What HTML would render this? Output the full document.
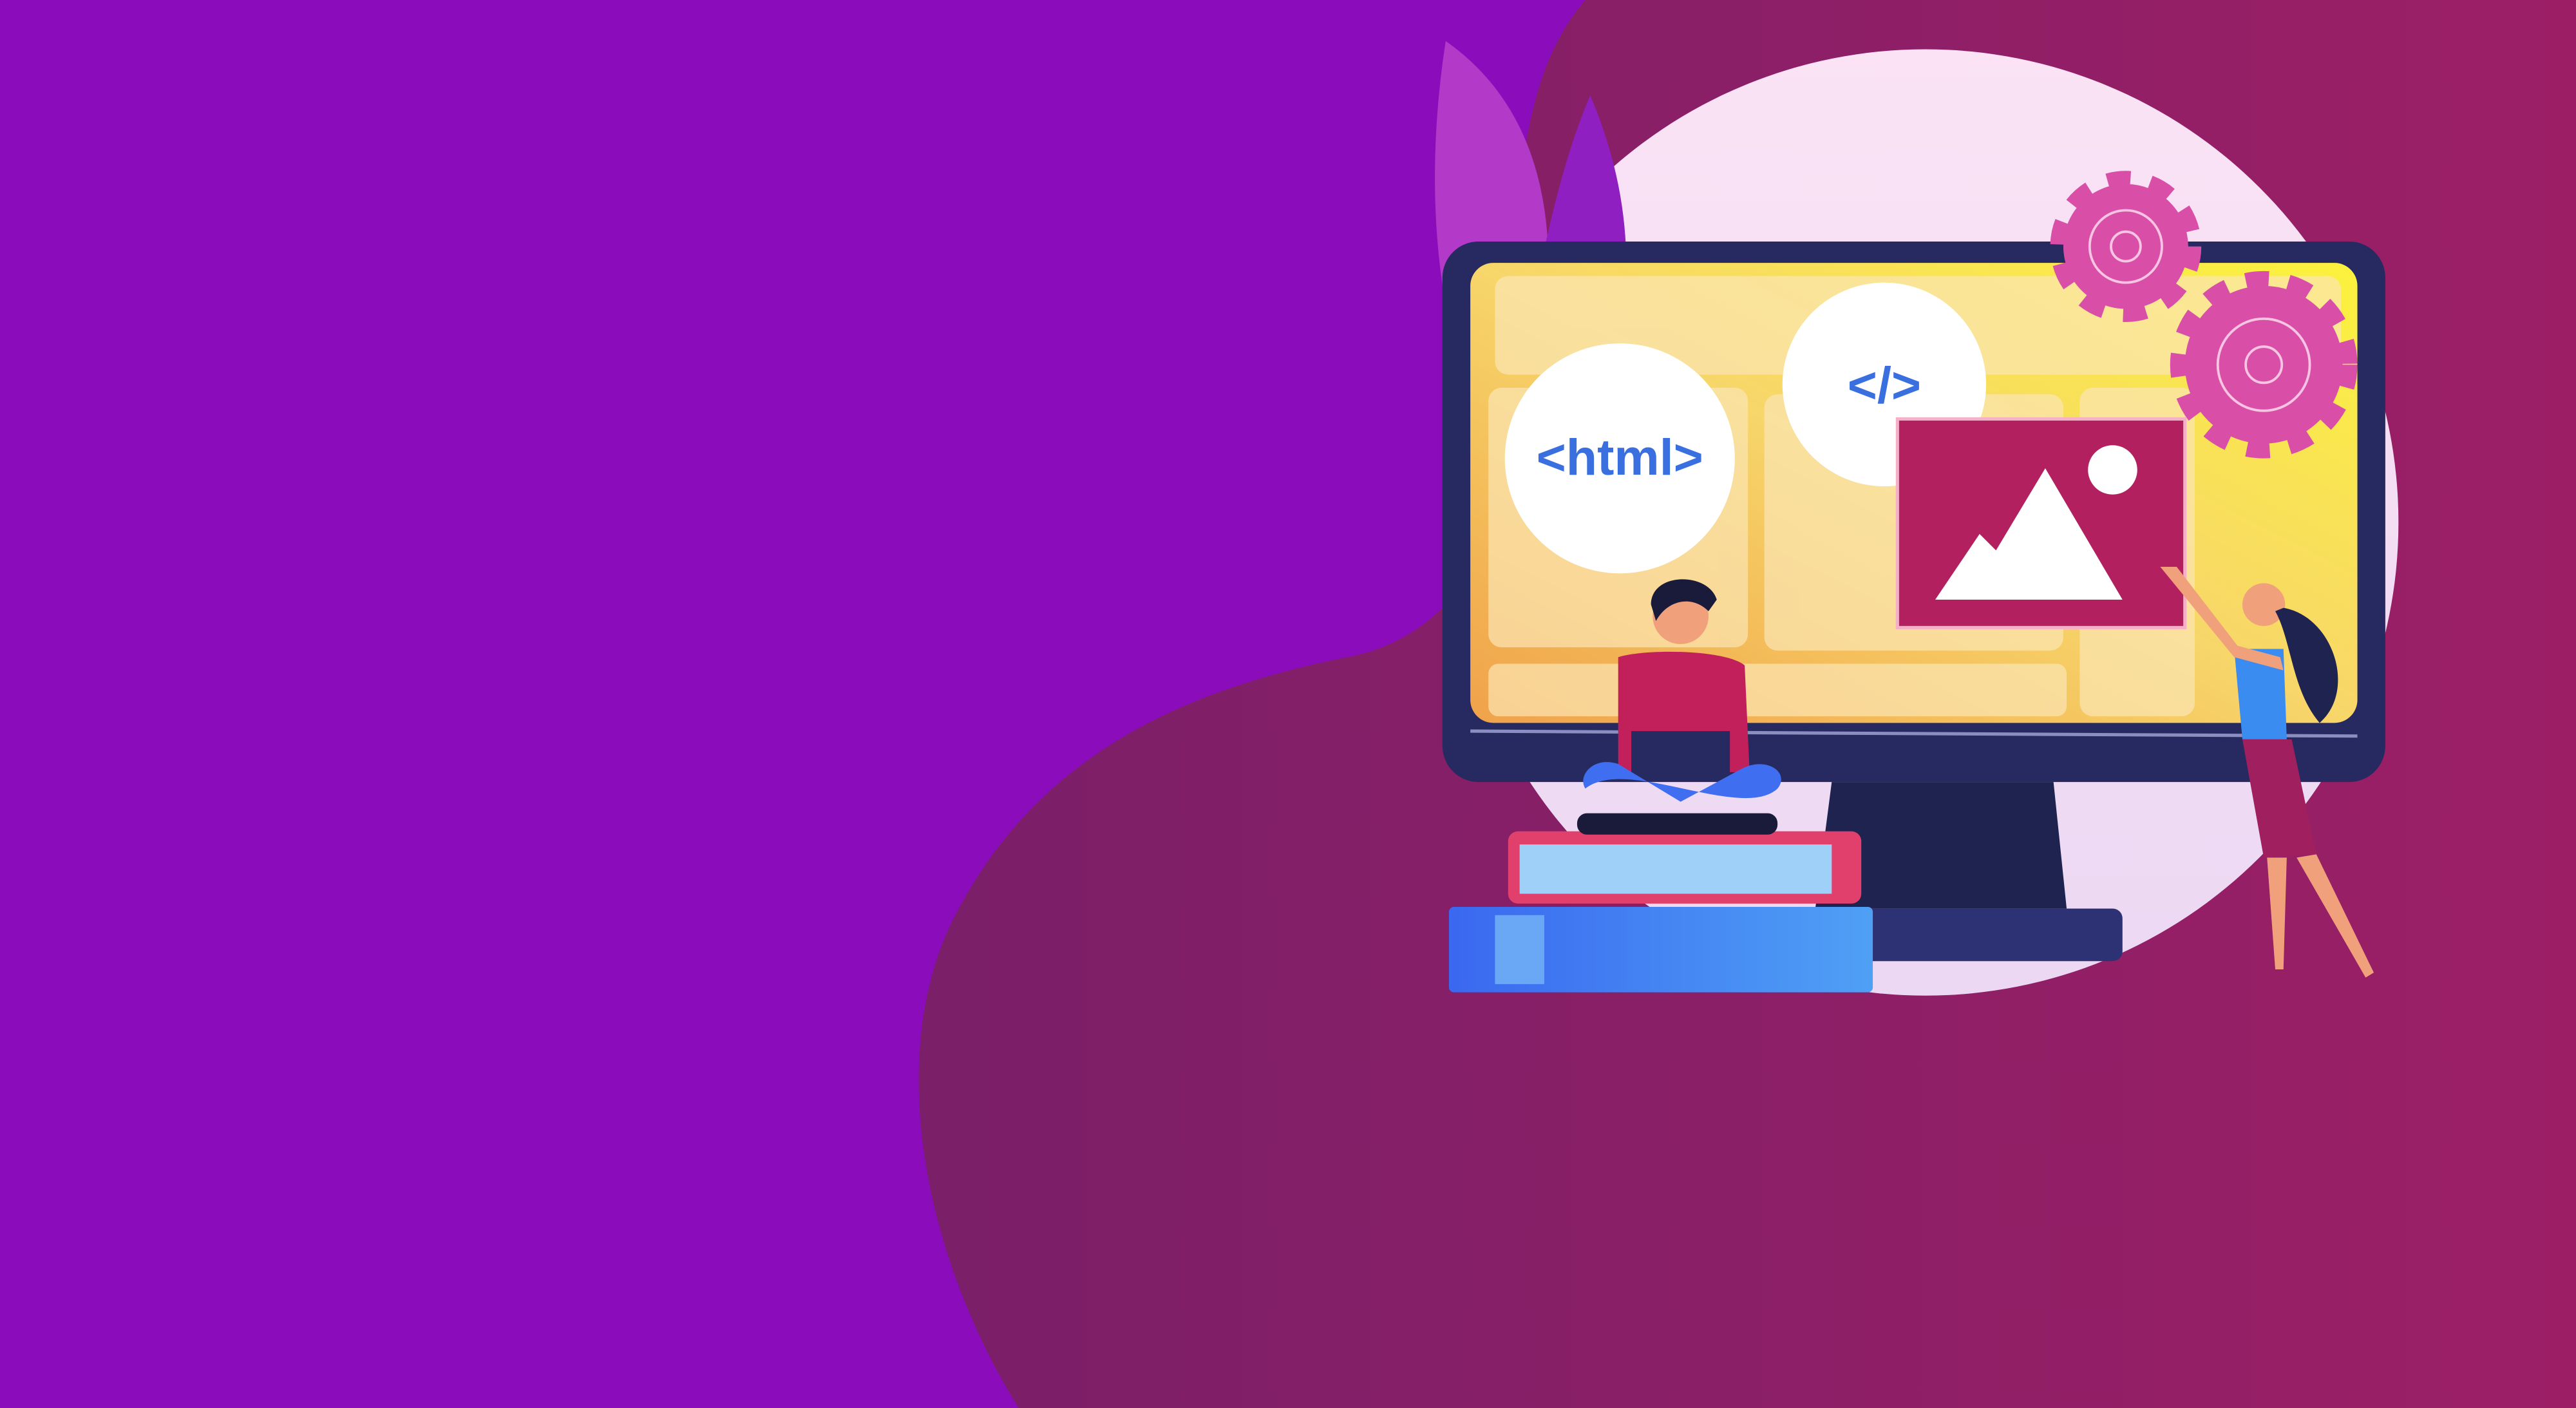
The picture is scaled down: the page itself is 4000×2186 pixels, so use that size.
<!DOCTYPE html>
<html><head><meta charset="utf-8"><style>html,body{margin:0;padding:0;overflow:hidden}body{width:4000px;height:2186px;background:#8a0cba}svg{display:block}</style></head>
<body>
<svg width="4000" height="2186" viewBox="0 0 1568 857" xmlns="http://www.w3.org/2000/svg">
<defs>
<linearGradient id="blob" x1="0" y1="0" x2="1" y2="0"><stop offset="0" stop-color="#7a1f68"/><stop offset="1" stop-color="#9c1f66"/></linearGradient>
<linearGradient id="scr" x1="0" y1="1" x2="1" y2="0"><stop offset="0" stop-color="#f0a24a"/><stop offset="0.5" stop-color="#f7d66a"/><stop offset="1" stop-color="#fbf23c"/></linearGradient>
<linearGradient id="pc" x1="0" y1="0" x2="0" y2="1"><stop offset="0" stop-color="#fbe3f5"/><stop offset="1" stop-color="#ecd8f3"/></linearGradient>
<linearGradient id="bk" x1="0" y1="0" x2="1" y2="0"><stop offset="0" stop-color="#3a68f0"/><stop offset="1" stop-color="#4fa0f5"/></linearGradient>
</defs>
<rect width="1568" height="857" fill="#8a0cba"/>
<path d="M965 0 L1568 0 L1568 857 L620 857 C560 760 540 640 580 560 C630 460 720 420 820 400 C900 385 930 300 925 200 C920 110 930 40 965 0 Z" fill="url(#blob)"/>
<circle cx="1172" cy="318" r="288" fill="url(#pc)"/>
<path d="M880 25 C930 60 950 120 940 200 L890 230 C870 160 870 90 880 25 Z" fill="#b33ac8"/>
<path d="M968 58 C990 110 995 160 985 210 L930 200 C940 150 950 100 968 58 Z" fill="#8f1fc0"/>
<rect x="878" y="147" width="574" height="329" rx="22" fill="#262a60"/>
<rect x="895" y="160" width="540" height="280" rx="14" fill="url(#scr)"/>
<g fill="#fbe6b4" opacity="0.7">
<rect x="910" y="168" width="515" height="60" rx="8"/>
<rect x="906" y="236" width="158" height="158" rx="8"/>
<rect x="1074" y="240" width="182" height="156" rx="8"/>
<rect x="1266" y="236" width="70" height="200" rx="8"/>
<rect x="906" y="404" width="352" height="32" rx="6"/>
</g>
<line x1="895" y1="445" x2="1435" y2="448" stroke="#8a8fc0" stroke-width="2"/>
<path d="M1115 476 L1250 476 L1258 553 L1105 553 Z" fill="#1f2350"/>
<rect x="1100" y="553" width="192" height="32" rx="6" fill="#2d3275"/>
<circle cx="986" cy="279" r="70" fill="#fff"/>
<text x="986" y="289" text-anchor="middle" font-family="Liberation Sans, sans-serif" font-weight="bold" font-size="31" fill="#3a6fe0">&lt;html&gt;</text>
<circle cx="1147" cy="234" r="62" fill="#fff"/>
<text x="1147" y="245" text-anchor="middle" font-family="Liberation Sans, sans-serif" font-weight="bold" font-size="31" fill="#3a6fe0">&lt;/&gt;</text>
<rect x="1155" y="255" width="175" height="127" fill="#b3205f" stroke="#f5b0c8" stroke-width="2"/>
<path d="M1178 365 L1205 325 L1215 335 L1245 285 L1292 365 Z" fill="#fff"/>
<circle cx="1286" cy="286" r="15" fill="#fff"/>
<g fill="#d94fa8">
<circle cx="1294" cy="150" r="38"/><circle cx="1378" cy="222" r="48"/>
</g>
<g fill="none" stroke="#d94fa8" stroke-width="10" stroke-dasharray="14 12">
<circle cx="1294" cy="150" r="41"/><circle cx="1378" cy="222" r="52"/>
</g>
<g fill="none" stroke="#f7c5e3" stroke-width="1.5"><circle cx="1294" cy="150" r="22"/><circle cx="1294" cy="150" r="9"/><circle cx="1378" cy="222" r="28"/><circle cx="1378" cy="222" r="11"/></g>
<rect x="882" y="552" width="258" height="52" rx="3" fill="url(#bk)"/>
<rect x="910" y="557" width="30" height="42" fill="#6aa8f5"/>
<rect x="918" y="506" width="215" height="44" rx="6" fill="#e0406b"/>
<rect x="925" y="514" width="190" height="30" fill="#9fd0f8"/>
<path d="M985 400 C1000 395 1050 395 1062 405 L1065 470 L985 470 Z" fill="#c2205a"/>
<circle cx="1023" cy="375" r="17" fill="#f0a07a"/>
<path d="M1005 368 C1005 348 1040 348 1045 365 L1040 372 C1030 362 1015 365 1008 378 Z" fill="#1a1a3a"/>
<rect x="993" y="445" width="60" height="30" fill="#262a60"/>
<path d="M965 480 C990 460 1060 500 1082 480 C1090 470 1075 460 1060 468 L1023 488 L985 465 C970 460 960 472 965 480 Z" fill="#3f6ef0"/>
<rect x="960" y="495" width="122" height="13" rx="6" fill="#1a1a3a"/>
<path d="M1360 395 L1390 395 L1392 450 L1365 450 Z" fill="#3a8cf0"/>
<path d="M1365 450 L1395 450 L1410 520 L1378 522 Z" fill="#a0205f"/>
<circle cx="1378" cy="368" r="13" fill="#f0a07a"/>
<path d="M1390 370 C1420 375 1435 420 1412 440 C1395 420 1395 390 1385 372 Z" fill="#1f2350"/>
<path d="M1380 522 L1385 590 L1390 590 L1392 522 Z M1398 522 L1440 595 L1445 592 L1410 520 Z" fill="#f0a07a"/>
<path d="M1315 345 L1360 400 L1390 408 L1388 400 L1362 393 L1325 345 Z" fill="#f0a07a"/>
</svg>
</body></html>
